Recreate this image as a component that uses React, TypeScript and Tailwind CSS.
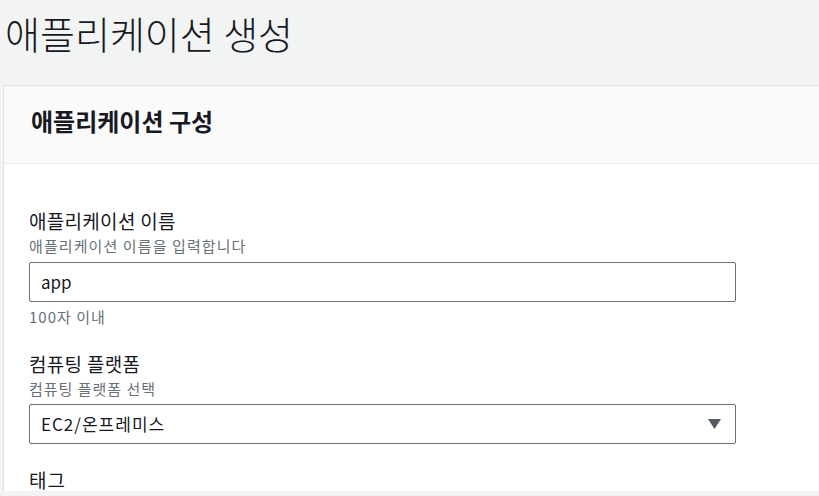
export default function App() {
  return (
    <div
      className="min-h-[496px] overflow-hidden bg-[#f2f3f3] text-[#16191f]"
      style={{ fontFamily: '"Noto Sans CJK KR", "Noto Sans", sans-serif' }}
    >
      <h1 className="pl-[5px] pt-[13px] text-[38px] font-light leading-[40px]">
        애플리케이션 생성
      </h1>

      <div className="ml-[3px] mt-[32px] w-[900px] border-l border-t border-[#e1e4e4] bg-white">
        <div className="border-b border-[#eaeded] bg-[#fafafa] pb-[28px] pl-[27px] pt-[20px]">
          <h2 className="text-[24px] font-bold leading-[29px]">애플리케이션 구성</h2>
        </div>

        <div className="pl-[25px] pt-[46px]">
          <div className="text-[19px] leading-[22px] tracking-[0.3px]">애플리케이션 이름</div>
          <div className="mt-[4px] text-[15px] leading-[20px] tracking-[1.1px] text-[#687078]">
            애플리케이션 이름을 입력합니다
          </div>
          <div className="mt-[6px] flex h-[40px] w-[707px] items-center rounded-[2px] border border-[#687078] px-[11px] text-[17px]">
            app
          </div>
          <div className="mt-[5px] text-[15px] leading-[20px] tracking-[1px] text-[#687078]">
            100자 이내
          </div>

          <div className="mt-[26px] text-[19px] leading-[22px] tracking-[0.3px]">컴퓨팅 플랫폼</div>
          <div className="mt-[4px] text-[15px] leading-[20px] tracking-[1px] text-[#687078]">
            컴퓨팅 플랫폼 선택
          </div>
          <div className="mt-[5px] flex h-[40px] w-[707px] items-center justify-between rounded-[2px] border border-[#687078] pl-[11px] pr-[14px] text-[17px] tracking-[1px]">
            <span>EC2/온프레미스</span>
            <svg width="13" height="10" viewBox="0 0 13 10">
              <path d="M0 0 H13 L6.5 10 Z" fill="#545b64" />
            </svg>
          </div>

          <div className="mt-[25px] text-[19px] leading-[22px] tracking-[1px]">태그</div>
        </div>
      </div>
    </div>
  )
}
